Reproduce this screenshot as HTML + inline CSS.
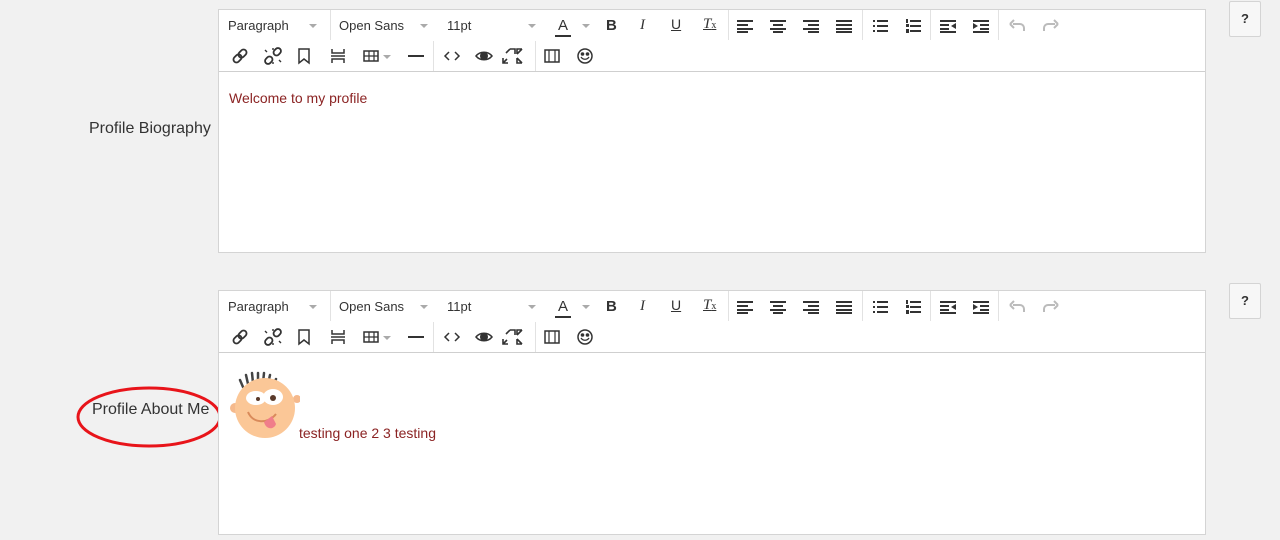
<!DOCTYPE html>
<html><head><meta charset="utf-8"><style>
body{margin:0;width:1280px;height:540px;background:#f1f1f1;font-family:"Liberation Sans",sans-serif;position:relative;overflow:hidden}
.ed{position:absolute;left:218px;width:986px;background:#fff;border:1px solid #d4d4d4}
.tb{position:absolute;left:0;top:0;width:986px;height:61px;border-bottom:1px solid #cfcfcf;background:#fff}
.t{position:absolute;font-size:13px;color:#333}
.ar{position:absolute;width:0;height:0;border-left:4px solid transparent;border-right:4px solid transparent;border-top:4px solid #aaa}
.sp{position:absolute;width:1px;height:30px;background:#e2e2e2}
.ic{position:absolute}
.lbl{position:absolute;font-size:16px;color:#333;}
.q{position:absolute;left:1229px;width:30px;height:34px;border:1px solid #d4d4d4;border-radius:2px;background:#f7f7f7;font-weight:bold;font-size:13px;color:#333;text-align:center;line-height:34px}
.content{position:absolute;left:10px;font-size:14px;color:#8b2323}
</style></head><body>

<div class="lbl" style="left:89px;top:120px">Profile Biography</div>
<div class="lbl" style="left:92px;top:401px">Profile About Me</div>
<svg style="position:absolute;left:76px;top:386px" width="148" height="64"><ellipse cx="73" cy="31" rx="71" ry="29" fill="none" stroke="#e8141a" stroke-width="3"/></svg>

<div class="q" style="top:1px">?</div>
<div class="q" style="top:283px">?</div>

<div class="ed" style="top:9px;height:242px" id="e1">
<div class="tb">
<div class="t" style="left:9px;top:8px">Paragraph</div><div class="ar" style="left:90px;top:14px"></div>
<div class="sp" style="left:111px;top:0"></div>
<div class="t" style="left:120px;top:8px">Open Sans</div><div class="ar" style="left:201px;top:14px"></div>
<div class="t" style="left:228px;top:8px">11pt</div><div class="ar" style="left:309px;top:14px"></div>
<div class="t" style="left:339px;top:7px;font-size:15px">A</div><div style="position:absolute;left:336px;top:25px;width:16px;height:2px;background:#333"></div><div class="ar" style="left:363px;top:14px"></div>
<div class="t" style="left:387px;top:7px;font-size:15px;font-weight:bold">B</div>
<div class="t" style="left:421px;top:7px;font-size:15px;font-style:italic;font-family:'Liberation Serif',serif">I</div>
<div class="t" style="left:452px;top:6px;font-size:14px;text-decoration:underline">U</div>
<div class="t" style="left:484px;top:6px;font-size:15px;font-style:italic;text-decoration:underline;font-family:'Liberation Serif',serif">T<span style="font-size:10px;font-style:normal;text-decoration:none">x</span></div>
<div class="sp" style="left:509px;top:0"></div>
<svg class="ic" style="left:518px;top:9px" width="260" height="14" fill="#333">
<rect x="0" y="1" width="16" height="2"/><rect x="0" y="5" width="11" height="2"/><rect x="0" y="9" width="16" height="2"/><rect x="0" y="12" width="11" height="2"/>
<rect x="33" y="1" width="16" height="2"/><rect x="36" y="5" width="10" height="2"/><rect x="33" y="9" width="16" height="2"/><rect x="36" y="12" width="10" height="2"/>
<rect x="66" y="1" width="16" height="2"/><rect x="71" y="5" width="11" height="2"/><rect x="66" y="9" width="16" height="2"/><rect x="71" y="12" width="11" height="2"/>
<rect x="99" y="1" width="16" height="2"/><rect x="99" y="5" width="16" height="2"/><rect x="99" y="9" width="16" height="2"/><rect x="99" y="12" width="16" height="2"/>
<rect x="136" y="1" width="2" height="2"/><rect x="140" y="1" width="11" height="2"/><rect x="136" y="6" width="2" height="2"/><rect x="140" y="6" width="11" height="2"/><rect x="136" y="11" width="2" height="2"/><rect x="140" y="11" width="11" height="2"/>
<rect x="169" y="0" width="2" height="4"/><rect x="173" y="1" width="11" height="2"/><rect x="169" y="5" width="3" height="3"/><rect x="173" y="6" width="11" height="2"/><rect x="169" y="10" width="3" height="4"/><rect x="173" y="11" width="11" height="2"/>
<rect x="203" y="1" width="16" height="2"/><rect x="203" y="5" width="9" height="2"/><path d="M219 4 L214 7 L219 10Z"/><rect x="203" y="9" width="9" height="2"/><rect x="203" y="12" width="16" height="2"/>
<rect x="236" y="1" width="16" height="2"/><rect x="243" y="5" width="9" height="2"/><path d="M236 4 L241 7 L236 10Z"/><rect x="243" y="9" width="9" height="2"/><rect x="236" y="12" width="16" height="2"/>
</svg>
<div class="sp" style="left:643px;top:0"></div>
<div class="sp" style="left:711px;top:0"></div>
<div class="sp" style="left:779px;top:0"></div>
<svg class="ic" style="left:790px;top:8px" width="50" height="16" fill="none" stroke="#bbb" stroke-width="2"><path d="M4 6h7a4 4 0 0 1 4 4v3"/><path d="M1 6l4-4M1 6l4 4"/><path d="M46 6h-7a4 4 0 0 0-4 4v3"/><path d="M49 6l-4-4M49 6l-4 4"/></svg>
<div class="sp" style="left:214px;top:31px"></div>
<div class="sp" style="left:316px;top:31px"></div>
<svg class="ic" style="left:12px;top:37px" width="380" height="18" fill="none" stroke="#333" stroke-width="2">
<g transform="rotate(-45 9 9)"><rect x="1" y="6" width="9" height="6" rx="3" stroke-width="1.8"/><rect x="8" y="6" width="9" height="6" rx="3" stroke-width="1.8"/></g>
<g transform="rotate(-45 42 9)"><rect x="32" y="6" width="8" height="6" rx="3" stroke-width="1.8"/><rect x="44" y="6" width="8" height="6" rx="3" stroke-width="1.8"/></g>
<path d="M34 3l2 2M50 15l-2-2M42 1v2M42 15v2" stroke-width="1.4"/>
<path d="M68 2h10v14l-5-4-5 4z" stroke-width="1.5"/>
<path d="M101 2v4h12V2M101 16v-4h12v4M100 9h14" stroke-width="1.5"/>
<rect x="133" y="4" width="14" height="10" stroke-width="1.5"/><path d="M133 9h14M138 4v10M143 4v10" stroke-width="1.2"/>
<path d="M177 9h16"/>
<path d="M218 5l-4 4 4 4M224 5l4 4-4 4" stroke-width="1.5"/>
<path d="M245 9c4-5 12-5 16 0c-4 5-12 5-16 0z" stroke-width="1.5"/><circle cx="253" cy="9" r="3" fill="#333"/>
<path d="M279 2h5v5M277 16h-5v-5M279 2l-4 4M272 16l4-4M291 2h-5v5M291 2l-5 5M291 16h-5v-5M291 16l-5-5" stroke-width="1.6"/>
<rect x="314" y="3" width="14" height="12" stroke-width="1.5"/><path d="M318 3v12M324 3v12" stroke-width="1.2"/>
<circle cx="354" cy="9" r="7" stroke-width="1.5"/><path d="M350 10c2 3 6 3 8 0" stroke-width="1.3"/><circle cx="351.5" cy="7" r=".8" fill="#333"/><circle cx="356.5" cy="7" r=".8" fill="#333"/>
</svg>
<div class="ar" style="left:164px;top:45px"></div>
</div>
<div class="content" style="top:80px">Welcome to my profile</div>
</div>

<div class="ed" style="top:290px;height:243px" id="e2"></div>

<script>
var e2=document.getElementById('e2');e2.innerHTML=document.getElementById('e1').querySelector('.tb').outerHTML+
'<svg style="position:absolute;left:9px;top:79px" width="72" height="70"><g stroke="#444" stroke-width="2.5" stroke-linecap="round"><path d="M12 10l3 7M18 5l2 9M24 3l1 10M30 3v10M36 3l-1 10M42 5l-2 9M48 9l-3 7"/></g><circle cx="7" cy="38" r="5" fill="#f5b98c"/><circle cx="69" cy="29" r="4" fill="#f5b98c"/><circle cx="37" cy="38" r="30" fill="#fbc797"/><ellipse cx="28" cy="28" rx="10" ry="7" fill="#fff"/><ellipse cx="45" cy="27" rx="10" ry="8" fill="#fff"/><circle cx="30" cy="29" r="2" fill="#5a3a2a"/><circle cx="45" cy="28" r="3" fill="#5a3a2a"/><path d="M20 42c5 12 20 12 28 2" fill="none" stroke="#d98a5a" stroke-width="2"/><path d="M36 52c2 8 10 8 12 2l-4-8z" fill="#f07d8a"/></svg>'+
'<div class="content" style="top:134px;left:80px">testing one 2 3 testing</div>';
</script>
</body></html>
